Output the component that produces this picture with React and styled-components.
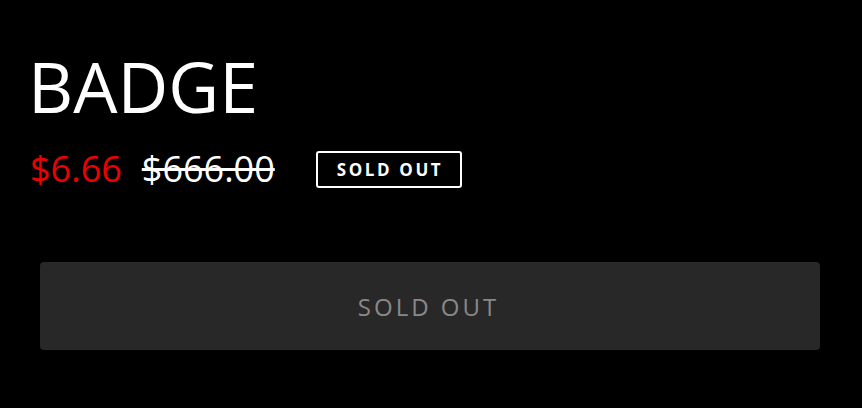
import React from "react";
import styled, { createGlobalStyle } from "styled-components";

const GlobalStyle = createGlobalStyle`
  body {
    margin: 0;
    background: #000;
    font-family: "Open Sans", "Noto Sans", sans-serif;
  }
`;

const Page = styled.div`
  width: 862px;
  height: 408px;
  background: #000;
  box-sizing: border-box;
  padding: 46px 30px 0 30px;
`;

const Title = styled.h1`
  margin: 0 0 0 -2px;
  font-size: 70px;
  font-weight: 400;
  line-height: 80px;
  color: #fff;
`;

const PriceRow = styled.div`
  display: flex;
  align-items: center;
  margin-top: 21px;
`;

const Price = styled.span`
  font-size: 36px;
  line-height: 44px;
  color: ${(p) => (p.$sale ? "#e00" : "#fff")};
  text-decoration: ${(p) => (p.$old ? "line-through" : "none")};
  margin-right: ${(p) => (p.$old ? "41px" : "20px")};
`;

const Badge = styled.span`
  border: 2px solid #fff;
  border-radius: 3px;
  padding: 5px 17px 5px 19px;
  font-size: 17px;
  font-weight: 700;
  letter-spacing: 2.6px;
  color: #fff;
`;

const Button = styled.button`
  display: flex;
  align-items: center;
  justify-content: center;
  width: 780px;
  height: 88px;
  margin: 71px 0 0 10px;
  background: #282828;
  border: none;
  border-radius: 4px;
  color: #888;
  font-family: inherit;
  font-size: 24px;
  letter-spacing: 3px;
  padding: 0 3px 0 0;
`;

export default function App() {
  return (
    <Page>
      <GlobalStyle />
      <Title>BADGE</Title>
      <PriceRow>
        <Price $sale>$6.66</Price>
        <Price $old>$666.00</Price>
        <Badge>SOLD OUT</Badge>
      </PriceRow>
      <Button disabled>SOLD OUT</Button>
    </Page>
  );
}
